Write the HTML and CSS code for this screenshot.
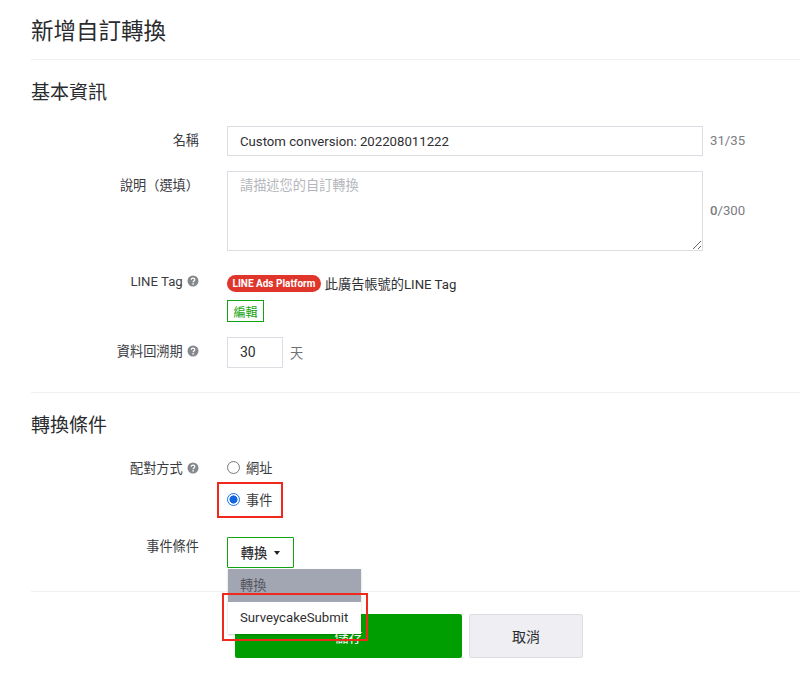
FILE: index.html
```html
<!DOCTYPE html>
<html lang="zh-Hant">
<head>
<meta charset="utf-8">
<title>新增自訂轉換</title>
<link rel="stylesheet" href="styles.css">
</head>
<body>
<svg class="defs" width="0" height="0" aria-hidden="true"><symbol id="help" viewBox="0 0 12 12"><circle cx="6" cy="6" r="5.5" fill="#85888c"/><path d="M4.2 4.7c0-1 .8-1.6 1.8-1.6s1.8.6 1.8 1.5c0 1.4-1.7 1.3-1.7 2.6" fill="none" stroke="#fff" stroke-width="1.2"/><circle cx="6.1" cy="8.9" r=".8" fill="#fff"/></symbol></svg>
<main class="page">
  <h1 class="title">新增自訂轉換</h1>
  <section class="section basic">
    <h2 class="heading">基本資訊</h2>
    <div class="row row-name">
      <label class="label">名稱</label>
      <div class="control"><div class="field input-name">Custom conversion: 202208011222</div><span class="count">31/35</span></div>
    </div>
    <div class="row row-desc">
      <label class="label">說明（選填）</label>
      <div class="control center"><div class="field area"><span class="placeholder">請描述您的自訂轉換</span>
        <svg class="grip" width="10" height="10" viewBox="0 0 10 10"><path d="M1 9 9 1M6 9 9 6" stroke="#666" stroke-width="1" fill="none"/></svg></div><span class="count"><b class="zero">0</b>/300</span></div>
    </div>
    <div class="row row-tag">
      <label class="label">LINE Tag <svg class="help"><use href="#help"/></svg></label>
      <div class="stack">
        <div class="tagline"><span class="pill">LINE Ads Platform</span><span class="tagtext">此廣告帳號的LINE Tag</span></div>
        <button class="edit">編輯</button>
      </div>
    </div>
    <div class="row row-days">
      <label class="label">資料回溯期 <svg class="help"><use href="#help"/></svg></label>
      <div class="control"><div class="field days">30</div><span class="unit">天</span></div>
    </div>
  </section>
  <section class="section cond">
    <h2 class="heading">轉換條件</h2>
    <div class="row row-match">
      <label class="label">配對方式 <svg class="help"><use href="#help"/></svg></label>
      <div class="stack radios">
        <div class="radio"><span class="dot"></span>網址</div>
        <div class="radio"><span class="dot on"></span>事件<span class="mark mark-event"></span></div>
      </div>
    </div>
    <div class="row row-event">
      <label class="label">事件條件</label>
      <div class="dropwrap">
        <div class="drop">轉換<span class="caret"></span></div>
        <ul class="menu">
          <li class="opt sel">轉換</li>
          <li class="opt">SurveycakeSubmit</li>
        </ul>
        <span class="mark mark-opt"></span>
      </div>
    </div>
  </section>
  <footer class="actions">
    <button class="btn save">儲存</button>
    <button class="btn cancel">取消</button>
  </footer>
</main>
</body>
</html>
```
FILE: styles.css
```css
* { box-sizing: border-box; }
html, body { margin: 0; height: 674px; overflow: hidden; background: #fff; }
body { font-family: Roboto, "Noto Sans CJK TC", sans-serif; font-size: 13.2px; color: #2f3033; }
.defs { position: absolute; }
.page { padding-left: 31px; }
.title { margin: 0; height: 60px; padding-top: 16px; font-size: 22.5px; line-height: 30px; font-weight: 400; color: #2a2b2e; border-bottom: 1px solid #f1f1f3; }
.section { border-bottom: 1px solid #f1f1f3; }
.basic { height: 333px; padding-top: 20px; }
.cond { height: 199px; padding-top: 20px; }
.heading { margin: 0; font-size: 19px; line-height: 26px; font-weight: 400; color: #2a2b2e; }
.row { display: grid; grid-template-columns: 168px 1fr; column-gap: 28px; }
.label { text-align: right; line-height: 20px; color: #3a3b3f; }
.help { width: 12px; height: 12px; margin-left: 1px; vertical-align: -1px; }
.control { display: flex; align-items: center; }
.field { border: 1px solid #dcdce2; background: #fff; font-size: 13.2px; color: #2f3033; }
.input-name { width: 476px; height: 30px; line-height: 29px; padding-left: 12px; }
.count { margin-left: 7px; color: #7b7d82; line-height: 20px; }
.zero { font-weight: 500; }
.row-name { margin-top: 20px; }
.row-name .label { padding-top: 5px; }
.row-desc { margin-top: 15px; }
.row-desc .label { padding-top: 5px; }
.area { position: relative; width: 476px; height: 80px; padding: 4px 12px; line-height: 20px; }
.placeholder { color: #b5b6bb; font-size: 13.2px; }
.grip { position: absolute; right: 0; bottom: 0; }
.row-tag { margin-top: 21px; }
.row-tag .label { padding-left: 2px; }
.stack { display: flex; flex-direction: column; align-items: flex-start; }
.tagline { display: flex; align-items: center; height: 21px; margin-top: 1px; }
.pill { height: 17px; line-height: 17px; padding: 0 5.5px; border-radius: 9px; background: #e0352b; color: #fff; font-size: 10px; font-weight: 700; white-space: nowrap; }
.tagtext { margin-left: 4px; color: #2f3033; }
.edit { margin-top: 6px; width: 37px; height: 22px; padding: 0; border: 1px solid #12a312; background: #fff; color: #12a312; font: 12px Roboto, "Noto Sans CJK TC", sans-serif; }
.row-days { margin-top: 15px; }
.row-days .label { padding-top: 5px; }
.days { width: 56px; height: 31px; line-height: 29px; padding-left: 12px; font-size: 14px; }
.unit { margin-left: 7px; color: #6f7176; }
.row-match { margin-top: 18px; }
.row-match .label { padding-top: 2px; }
.radio { position: relative; display: flex; align-items: center; height: 20px; color: #3a3b3f; }
.radio + .radio { margin-top: 12px; }
.dot { width: 13px; height: 13px; margin-right: 6px; border: 1px solid #77787c; border-radius: 50%; background: #fff; }
.dot.on { border-color: #1a73e8; background: radial-gradient(circle, #1266e0 0 3.8px, #fff 4.3px); }
.mark { position: absolute; border: 2px solid #f0291c; pointer-events: none; }
.mark-event { left: -10px; top: -7px; width: 66px; height: 36px; }
.row-event { margin-top: 28px; }
.dropwrap { position: relative; height: 30px; }
.drop { display: flex; align-items: center; justify-content: center; width: 67px; height: 31px; border: 1px solid #12a312; border-radius: 1px; background: #fff; color: #2f3033; font-size: 13.2px; font-weight: 500; }
.caret { width: 0; height: 0; margin-left: 7px; border: 3.5px solid transparent; border-top: 4px solid #222; border-bottom: 0; }
.menu { position: absolute; left: 1px; top: 32px; width: 133px; margin: 0; padding: 0; list-style: none; background: #fff; box-shadow: 0 1px 2px rgba(0,0,0,.2); z-index: 2; }
.opt { height: 32px; line-height: 32px; padding-left: 12px; color: #2f3033; }
.opt.sel { height: 33px; line-height: 34px; background: #a2a6b3; color: #55575e; }
.mark-opt { left: -5px; top: 56px; width: 146px; height: 48px; z-index: 3; }
.actions { display: flex; gap: 7px; margin-top: 22px; padding-left: 204px; }
.btn { height: 44px; border-radius: 2px; font: 14px Roboto, "Noto Sans CJK TC", sans-serif; }
.save { width: 227px; border: 0; background: #009e00; color: #fff; }
.cancel { width: 114px; border: 1px solid #dcdce2; background: #eeeef3; color: #2a2b2e; }
```
